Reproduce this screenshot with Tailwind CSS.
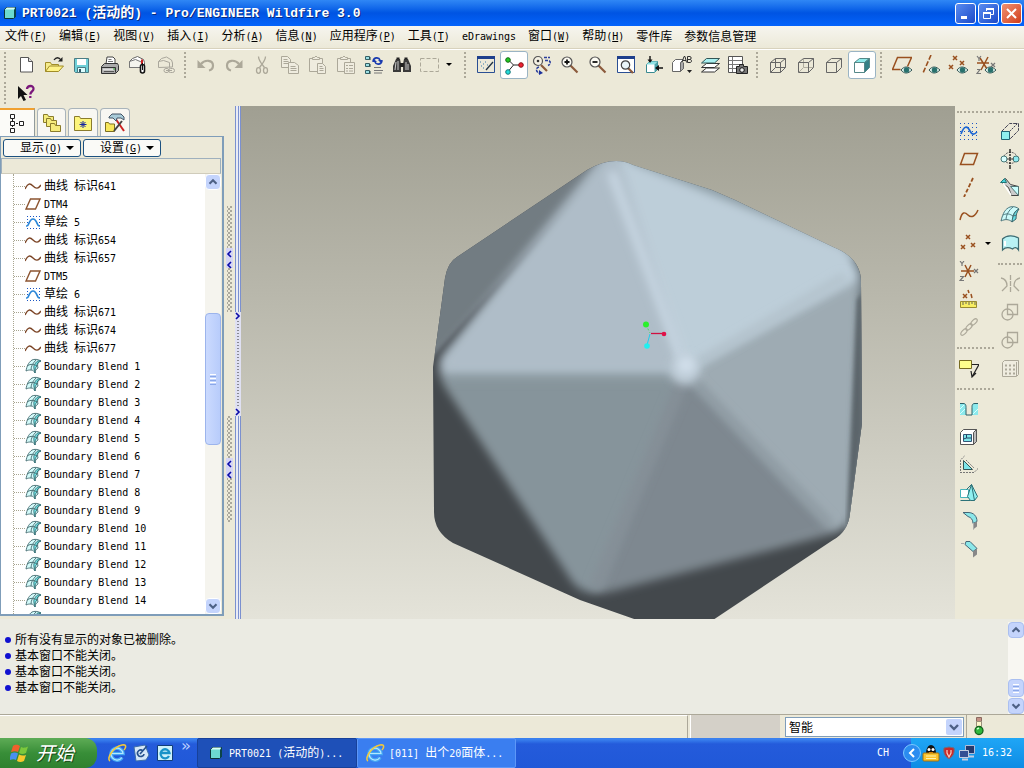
<!DOCTYPE html>
<html lang="zh-CN">
<head>
<meta charset="utf-8">
<meta name="viewport" content="width=device-width, initial-scale=1">
<title>PRT0021 (活动的) - Pro/ENGINEER Wildfire 3.0</title>
<script src="https://cdn.jsdelivr.net/npm/@tailwindcss/browser@4"></script>
</head>
<body class="flex h-screen flex-col overflow-hidden bg-[#ece9d8] font-['DejaVu_Sans_Mono','Noto_Sans_CJK_SC',monospace] text-[12px] leading-4 text-black">

<svg class="hidden" aria-hidden="true">
  <defs>
    <linearGradient id="gPage" x1="0" y1="0" x2="1" y2="1"><stop offset="0" stop-color="#fff"/><stop offset="1" stop-color="#7fb6e8"/></linearGradient>
    <symbol id="new" viewBox="0 0 20 20"><path d="M4.500 2.500h8l4 4v10.500h-12z" fill="#fff" stroke="#555"/><path d="M12.500 2.500v4h4" fill="#ddd" stroke="#555"/></symbol>
    <symbol id="open" viewBox="0 0 20 20"><path d="M1.500 16.500v-9h5l1 2h7v3" fill="#f6ec8c" stroke="#a08c28"/><path d="M1.500 16.500l4-5.500h14l-5 5.500z" fill="#fff387" stroke="#a08c28"/><path d="M10 5c2-3 5-3 7 0" fill="none" stroke="#222" stroke-width="1.300"/><path d="M18.500 2v4.500h-4.500z" fill="#222"/></symbol>
    <symbol id="save" viewBox="0 0 20 20"><path d="M2.500 3.500h14v14h-13l-1-1z" fill="#6fd0d8" stroke="#4c7c84"/><path d="M5 4h9v6H5z" fill="#fff"/><path d="M5.500 12.500h8v5h-8z" fill="#dff" stroke="#4c7c84"/><path d="M7 14h2v3H7z" fill="#356"/></symbol>
    <symbol id="print" viewBox="0 0 20 20"><path d="M6 9l1-7h6l2 2v6" fill="#fff" stroke="#444"/><path d="M8.500 4.500h3M8 6.500h5M8 8.500h5" stroke="#777"/><path d="M1.500 11.500l3-3h13l1 2v5l-3 3h-14z" fill="#aaa" stroke="#333"/><path d="M1.500 12.500h14v5" fill="none" stroke="#333"/><path d="M3 13.500h11v2H3z" fill="#ddd"/><path d="M4 16.500h10" stroke="#555"/><path d="M13 14h2" stroke="#3a3"/></symbol>
    <symbol id="mail" viewBox="0 0 20 20"><path d="M1.500 6.500l3-3 5-2 6 3 1 3v5h-15z" fill="#fff" stroke="#666"/><path d="M1.500 6.500l6-2 7 3v5h-13z" fill="#f4f4ee" stroke="#777"/><path d="M14 4.500v5" stroke="#c22" stroke-width="2"/><rect x="12.500" y="9.500" width="4" height="8.500" rx="2" fill="#fff" stroke="#111" stroke-width="1.600"/><path d="M14.500 8v7" stroke="#111"/></symbol>
    <symbol id="link" viewBox="0 0 20 20" fill="none" stroke="#aaa79c"><path d="M2.500 12.500v-6l3-3 5-1.500 5 3 1 3v4zM2.500 6.500l5-1 6 2v5"/><rect x="8" y="13.500" width="5" height="4" rx="2"/><rect x="12.500" y="13.500" width="6" height="4" rx="2"/><path d="M10 15.500h6"/></symbol>
    <symbol id="undo" viewBox="0 0 20 20"><path d="M5 9c4-5 12-4 12 1.500 0 3-2 4.500-4 5" fill="none" stroke="#aca899" stroke-width="2.200"/><path d="M1.500 5v8h8z" fill="#aca899"/></symbol>
    <symbol id="redo" viewBox="0 0 20 20"><path d="M15 9c-4-5-12-4-12 1.500 0 3 2 4.500 4 5" fill="none" stroke="#aca899" stroke-width="2.200"/><path d="M18.500 5v8h-8z" fill="#aca899"/></symbol>
    <symbol id="cut" viewBox="0 0 20 20" fill="none" stroke="#aca899" stroke-width="1.300"><path d="M6.500 1.500c0 4 3 7 6 11M13.500 1.500c0 4-3 7-6 11"/><ellipse cx="6.500" cy="15.500" rx="2" ry="2.800"/><ellipse cx="13.500" cy="15.500" rx="2" ry="2.800"/></symbol>
    <symbol id="copy" viewBox="0 0 20 20" fill="#efecdf" stroke="#aca899"><path d="M1.500 1.500h6l3 3v8h-9z"/><path d="M3.500 4.500h4M3.500 6.500h5M3.500 8.500h5"/><path d="M8.500 7.500h6l4 3v8h-10z"/><path d="M10.500 11.500h5M10.500 13.500h6M10.500 15.500h6"/></symbol>
    <symbol id="paste" viewBox="0 0 20 20" fill="#efecdf" stroke="#aca899"><path d="M1.500 3.500h13v13h-13z"/><path d="M4.500 4.500v-2h2l1.500-1.500 1.500 1.500h2v2z"/><path d="M9.500 8.500h5l3 3v7h-8z"/><path d="M11.500 11.500h3M11.500 13.500h4M11.500 15.500h4"/></symbol>
    <symbol id="pastesp" viewBox="0 0 20 20" fill="#efecdf" stroke="#aca899"><path d="M1.500 3.500h13v13h-13z"/><path d="M4.500 4.500v-2h2l1.500-1.500 1.500 1.500h2v2z"/><path d="M8.500 7.500h10v11h-10z"/><path d="M10 10.500h2M13 10.500h4M10 13.500h2M13 13.500h4M10 16h2M13 16h4"/></symbol>
    <symbol id="regen" viewBox="0 0 20 20"><g fill="#9adfe4" stroke="#356066"><path d="M1.500 1.500h4v3h-4zM1.500 8.500h4v3h-4zM1.500 15.500h4v3h-4z"/></g><path d="M6 2v3M6 9v3M6 16v3" stroke="#244"/><path d="M9 6c1-4 6-4 7-1M18 6c-1 4-6 4-7 1" fill="none" stroke="#1a3bb0" stroke-width="1.600"/><path d="M14 5h5l-2 3zM8 7h5l-3-3z" fill="#1a3bb0"/><path d="M10 12.500h7M10 15.500h9M10 18h8" stroke="#777"/></symbol>
    <symbol id="find" viewBox="0 0 20 20"><path d="M4 4h4l1 5v8H1v-6zM12 4h4l3 7v6h-8V9z" fill="#3a3a3a"/><path d="M8 8h4v4H8zM4.500 2.500h3v2h-3zM12.500 2.500h3v2h-3z" fill="#222"/><path d="M4 7l-1 8M6 6v9M14 7v8M16 9v6" stroke="#ccc"/></symbol>
    <symbol id="selbox" viewBox="0 0 20 20"><path d="M.5 3.500h18v13H.5z" fill="none" stroke="#aca899" stroke-dasharray="4 2"/></symbol>
    <symbol id="sketchwin" viewBox="0 0 20 20"><path d="M1.500 1.500h17v16h-17z" fill="url(#gPage)" stroke="#2a4f94"/><path d="M1 1h18v3H1z" fill="#1e3f8c"/><path d="M10 15l7-8" stroke="#234" stroke-width="1.300"/><path d="M4 7h1M7 9h1M5 11h1M9 7h1M11 10h1M7 13h1" stroke="#37a"/></symbol>
    <symbol id="spin" viewBox="0 0 20 20"><path d="M4.500 5l5 5h8M9.500 10l-5 6" fill="none" stroke="#222"/><circle cx="4" cy="5" r="2.300" fill="#2c2" stroke="#161"/><circle cx="17" cy="10" r="2.300" fill="#e23" stroke="#811"/><circle cx="4" cy="17" r="2.300" fill="#2dd" stroke="#177"/></symbol>
    <symbol id="orient" viewBox="0 0 20 20"><path d="M9 10l6 6" stroke="#8b5a3c" stroke-width="2.200"/><circle cx="6" cy="6" r="4.500" fill="#f4f1e4" stroke="#555" stroke-width="1.200"/><circle cx="6" cy="6" r="1.300" fill="#333"/><path d="M12 2.500h6M13 5.500h3c3 0 3 4 0 5M7 12c-4 1-3 6 1 6" fill="none" stroke="#2a3f9c" stroke-dasharray="3 1" stroke-width="1.500"/><path d="M7 15v5l4-2z" fill="#1a2f9c"/></symbol>
    <symbol id="zoomin" viewBox="0 0 20 20"><path d="M10.500 10.500l7 7" stroke="#8b5a3c" stroke-width="2.200"/><circle cx="7" cy="7" r="5" fill="#fbfaf2" stroke="#555" stroke-width="1.200"/><path d="M4.500 7h5M7 4.500v5" stroke="#111" stroke-width="1.800"/></symbol>
    <symbol id="zoomout" viewBox="0 0 20 20"><path d="M10.500 10.500l7 7" stroke="#8b5a3c" stroke-width="2.200"/><circle cx="7" cy="7" r="5" fill="#fbfaf2" stroke="#555" stroke-width="1.200"/><path d="M4.500 7h5" stroke="#111" stroke-width="1.800"/></symbol>
    <symbol id="refit" viewBox="0 0 20 20"><path d="M1.500 1.500h17v16h-17z" fill="#fff" stroke="#2a4f94"/><path d="M1 1h18v3H1z" fill="#1e3f8c"/><path d="M12 13l5 5" stroke="#8b5a3c" stroke-width="2.200"/><circle cx="9.500" cy="10" r="4.200" fill="#e9f4f8" stroke="#444" stroke-width="1.200"/></symbol>
    <symbol id="reorient" viewBox="0 0 20 20"><path d="M2.500 9.500l3-3h8v8l-3 3h-8z" fill="#fff" stroke="#3a8a90"/><path d="M2.500 9.500l3-3h8l-3 3z" fill="#8fe4e6"/><path d="M10.500 9.500l3-3v8l-3 3z" fill="#4aa4aa"/><path d="M6 1v6M19 13h-6" stroke="#111" stroke-width="1.400"/><path d="M3.500 4.500h5L6 8zM15 10v6l-4-3z" fill="#111"/></symbol>
    <symbol id="saved" viewBox="0 0 20 20"><path d="M.5 7.500l3-3h8v9l-3 3h-8z" fill="#fff" stroke="#666"/><path d="M8.500 7.500v9l3-3v-9z" fill="#aaa" stroke="#666"/><path d="M10 7.500l2-6h1l1.500 6M11 5.500h3M15.500 1.500v6h2.500c2 0 2-3 0-3h-2 2c1.500 0 1.500-3 0-3z" fill="#ece9d8" stroke="#333"/><path d="M15 15h5l-2.500 3z" fill="#222"/></symbol>
    <symbol id="layers" viewBox="0 0 20 20"><path d="M1.500 17l5-4h13l-5 4zM1.500 12.500l5-4h13l-5 4z" fill="#fff" stroke="#333"/><path d="M1.500 8l5-4.500h13L14.500 8z" fill="#a8f0f0" stroke="#355"/></symbol>
    <symbol id="viewmgr" viewBox="0 0 20 20"><path d="M.5 1.500h14v16H.5z" fill="#fff" stroke="#555"/><path d="M1 5.500h13M1 9.500h13M1 13.500h13M4.500 2v15" stroke="#777"/><path d="M8.500 11.500h3v-2h4v2h4v7h-11z" fill="#777" stroke="#222"/><circle cx="14" cy="15" r="2.300" fill="#eee" stroke="#111"/></symbol>
    <symbol id="wire" viewBox="0 0 20 20" fill="none" stroke="#666"><path d="M2.500 7.500h10v10h-10zM7.500 3.500h10v9h-10zM2.500 7.500l5-4M12.500 7.500l5-4M12.500 17.500l5-5M2.500 17.500l5-5"/></symbol>
    <symbol id="hidden" viewBox="0 0 20 20" fill="none" stroke="#666"><path d="M7.500 4v8.500H17M7 13l-4 4" stroke="#b0ad9f"/><path d="M2.500 7.500h10v10h-10zM2.500 7.500l5-4h10v9l-5 5M12.500 7.500l5-4"/></symbol>
    <symbol id="nohidden" viewBox="0 0 20 20" fill="none" stroke="#666"><path d="M2.500 7.500h10v10h-10zM2.500 7.500l5-4h10v9l-5 5M12.500 7.500l5-4"/></symbol>
    <symbol id="shade" viewBox="0 0 20 20" stroke="#588"><path d="M2.500 7.500h10v10h-10z" fill="#fff"/><path d="M2.500 7.500l5-4h10l-5 4z" fill="#8eeaea"/><path d="M12.500 7.500l5-4v9l-5 5z" fill="#338086"/></symbol>
    <symbol id="eye" viewBox="0 0 20 20"><path d="M9 15c3-4 7-4 11 0-4 4-8 4-11 0z" fill="#d9eee8" stroke="#355"/><circle cx="14.500" cy="15" r="2.700" fill="#28706c"/></symbol>
    <symbol id="eplane" viewBox="0 0 20 20"><path d="M8.500 14.500h-8l5-12h14l-4 9" fill="none" stroke="#99501f" stroke-width="1.500"/><use href="#eye"/></symbol>
    <symbol id="eaxis" viewBox="0 0 20 20"><path d="M11 0L3 18" fill="none" stroke="#99501f" stroke-width="1.600" stroke-dasharray="5 2"/><use href="#eye"/></symbol>
    <symbol id="epoint" viewBox="0 0 20 20"><path d="M5 1l4 4m0-4l-4 4M12 6l4 4m0-4l-4 4M1 10l4 4m0-4l-4 4" stroke="#99501f" stroke-width="1.500"/><use href="#eye"/></symbol>
    <symbol id="ecsys" viewBox="0 0 20 20"><path d="M1 8h12M4 3l7 11M12 2L5 15" stroke="#99501f" stroke-width="1.500"/><path d="M1 1l2 2.500 2-2.500M3 3v3M1 14.500h3l-3 4h4M15 8l4 4m0-4l-4 4" fill="none" stroke="#777" stroke-width="1.200"/><use href="#eye"/></symbol>
    <symbol id="help" viewBox="0 0 20 20"><path d="M2 3v13l3-3 2.500 5 2.500-1-2.500-5h4z" fill="#111"/><path d="M11 6c0-4 7-4 6.500 0-.2 2.500-3 2.500-3.200 5.500M14.300 13v2" fill="none" stroke="#7b177b" stroke-width="2.300"/></symbol>

    <symbol id="sketch" viewBox="0 0 20 20"><g fill="none" stroke="#1b56c4" stroke-dasharray="1 3"><path d="M1 2.500h18M1 6.500h18M1 10.500h18M1 14.500h18M1 18.500h18"/></g><path d="M2 13c3-8 6-9 9-3 2 4 4 4 7 1" fill="none" stroke="#1b66d4" stroke-width="1.700"/></symbol>
    <symbol id="sketchnode" viewBox="0 0 16 16"><path d="M2 2.500h13M2 14.500h13M2.500 5v8M14.500 5v8" stroke="#1b56c4" stroke-dasharray="1 2"/><path d="M1 12h1c2 0 2-7 6-7s4 7 6 7h1" fill="none" stroke="#2a86d8" stroke-width="1.700"/></symbol>
    <symbol id="plane" viewBox="0 0 20 20"><path d="M1.500 15.500l4-11h13l-4 11z" fill="none" stroke="#99501f" stroke-width="1.500"/></symbol>
    <symbol id="axis" viewBox="0 0 20 20"><path d="M14 1L5 20" stroke="#99501f" stroke-width="1.800" stroke-dasharray="4 2"/></symbol>
    <symbol id="curve" viewBox="0 0 20 20"><path d="M1 15c2-9 5-8 8-5s7 2 10-5" fill="none" stroke="#99501f" stroke-width="1.500"/></symbol>
    <symbol id="curvenode" viewBox="0 0 16 16"><path d="M0 11c3-6 5-6 8-3s5 3 8-1" fill="none" stroke="#7c4526" stroke-width="1.400"/></symbol>
    <symbol id="planenode" viewBox="0 0 16 16"><path d="M1 13l4.500-10h9.500l-4.500 10z" fill="none" stroke="#8c5430" stroke-width="1.400"/></symbol>
    <symbol id="blendnode" viewBox="0 0 16 16"><path d="M1 13C2 8 3 5 7 2c2-1 6-1 9 1-3 1-4 3-3 7-2 1-3 3-3 5-1-2-2-3-4-3-2 0-3 0-5 1z" fill="#d4fbfb" stroke="#52777b"/><path d="M10 15c0-4 0-5 2-7 0-3 1-4 4-5-3-1-5 1-6 3-2 2-1 5 0 9z" fill="#6fe6e8" stroke="#3c777c"/><path d="M2 8c3-2 5-2 8-1l3 1M6 12c0-4 2-7 5-10" fill="none" stroke="#52777b"/></symbol>
    <symbol id="point" viewBox="0 0 20 20"><path d="M7 2l4 4m0-4L7 6M12 10l4 4m0-4l-4 4M2 12l4 4m0-4l-4 4" stroke="#99501f" stroke-width="1.500"/></symbol>
    <symbol id="csys" viewBox="0 0 20 20"><path d="M2 10h13M6 4l6 12M12 4L6 16" stroke="#99501f" stroke-width="1.500"/><path d="M1 0l2 2.500L5 0M3 2v3M1 15.500h3.500L1 19.500h4M15 8l4 4m0-4l-4 4" fill="none" stroke="#777" stroke-width="1.200"/></symbol>
    <symbol id="analysis" viewBox="0 0 20 20"><path d="M4 5l4 4m0-4L4 9M9 1l1 3M12 5l1 4" stroke="#99501f" stroke-width="1.500"/><path d="M1.500 12.500h16v6h-16z" fill="#f8ee62" stroke="#998b30"/><path d="M4 13v3M7 13v2M10 13v3M13 13v2M16 13v3" stroke="#665"/></symbol>
    <symbol id="chain" viewBox="0 0 20 20" fill="none" stroke="#aca899" stroke-width="1.200"><ellipse cx="5" cy="15" rx="2" ry="4" transform="rotate(45 5 15)"/><ellipse cx="10" cy="10" rx="2" ry="4" transform="rotate(45 10 10)"/><ellipse cx="15" cy="5" rx="2" ry="4" transform="rotate(45 15 5)"/></symbol>
    <symbol id="note" viewBox="0 0 20 20"><path d="M.5 2.500h12v8H.5z" fill="#ffff8c" stroke="#776b20"/><path d="M13 6.500h7L13.500 18M12 13l1 6 4-4" fill="none" stroke="#222" stroke-width="1.200"/></symbol>
    <symbol id="hole" viewBox="0 0 20 20"><path d="M1 4c4 0 6 0 6 4v8H1zM19 4c-4 0-6 0-6 4v8h6z" fill="#8be9ec"/><path d="M1 4.500h3c3 0 3 2 3 4v7.500h6V8.500c0-2 0-4 3-4h3" fill="none" stroke="#2f5f66"/><path d="M1 10l4-4M1 15l5-5M14 15l5-5" stroke="#d8ffff"/></symbol>
    <symbol id="shell" viewBox="0 0 20 20"><path d="M1.500 5.500l3-3h13v12l-3 3h-13z" fill="#fff" stroke="#555"/><path d="M14.500 5.500v12l3-3v-12z" fill="#bbb" stroke="#555"/><path d="M4.500 7.500h8v7h-8z" fill="#7de5ea" stroke="#357"/><path d="M4.500 12l3-1h5M7.500 7.500V11" fill="none" stroke="#246"/></symbol>
    <symbol id="rib" viewBox="0 0 20 20"><path d="M4.500 14.500v-9l9 9z" fill="#7de5ea" stroke="#355"/><path d="M1.500 16V5l4-4M1 17.500h14l4-4M7 5l8 8" fill="none" stroke="#777" stroke-dasharray="2 1"/></symbol>
    <symbol id="draft" viewBox="0 0 20 20"><path d="M1.500 6.500h8v8h-8z" fill="#fff" stroke="#4ab4ba"/><path d="M1.500 17.500h10l-3-4 4-12 6 12-3 4h-4" fill="#8ff0f0" stroke="#2c7278"/><path d="M7.500 6.500l5-5 3 16" fill="none" stroke="#2c7278"/></symbol>
    <symbol id="round" viewBox="0 0 20 20"><path d="M4 1.500h5c6 0 9 4 9 9l-4 2c0-4-2-6-5-7z" fill="#8be7e9" stroke="#467"/><path d="M14 12.500l4-2v5l-4 3z" fill="#888"/><path d="M14.500 12v6.500" stroke="#aaa"/></symbol>
    <symbol id="chamfer" viewBox="0 0 20 20"><path d="M7 2.500h4l7 7-4 3-8-7z" fill="#8be7e9" stroke="#467"/><path d="M14 12.500l4-3v6l-4 3z" fill="#888"/><path d="M2 4.500h3" stroke="#aaa"/></symbol>
    <symbol id="extrude" viewBox="0 0 20 20"><path d="M1.500 10.500l8-8h9v7l-9 9" fill="none" stroke="#445" stroke-dasharray="4 1"/><path d="M1.500 10.500h8v8h-8z" fill="#8ff0f0" stroke="#267"/><path d="M9.500 10.500l8-8" stroke="#445" stroke-dasharray="2 1"/></symbol>
    <symbol id="revolve" viewBox="0 0 20 20"><path d="M4 7c3-5 10-5 13 0M6 13c3 2 6 2 9 0" fill="none" stroke="#666" stroke-dasharray="2 1"/><circle cx="4" cy="10" r="3" fill="#d8ffff" stroke="#477"/><circle cx="16" cy="10" r="3" fill="#8feaf0" stroke="#477"/><path d="M10 0v20" stroke="#111" stroke-width="1.300" stroke-dasharray="4 1 2 1"/><path d="M7 10h7" stroke="#444"/></symbol>
    <symbol id="sweep" viewBox="0 0 20 20"><path d="M1.500 5.500l4-4 5 6 8 2v9h-7l-3-8z" fill="#ccc" stroke="#444"/><path d="M10.500 9.500h8v9z" fill="#c9ffff" stroke="#577"/><path d="M3 6l8 12" stroke="#fff" stroke-width="1.500"/><path d="M.5 5.500l4-4 2 4z" fill="#4ad0d8" stroke="#277"/></symbol>
    <symbol id="blend" viewBox="0 0 20 20"><path d="M1 16C3 8 5 4 10 2c3-1 7 0 9 2-5 2-6 6-7 13-3-3-7-3-11-1z" fill="#ccfafa" stroke="#4c767c"/><path d="M12 17l4-3c0-5 1-7 3-10-4 2-6 5-7 13z" fill="#63dde2" stroke="#3c666c"/><path d="M3 10c4-2 7-1 10 1l4-1M6 15c0-5 3-10 7-13" fill="none" stroke="#4c767c"/></symbol>
    <symbol id="style" viewBox="0 0 20 20"><path d="M2.500 6c4-4 11-4 16-1v12c-2-3-4-3-6-1-4-2-7-2-10 1z" fill="#b9f2f4" stroke="#3d6c72" stroke-width="1.200"/><path d="M5 8v5" stroke="#fff" stroke-width="2"/></symbol>
    <symbol id="mirror" viewBox="0 0 20 20" fill="none" stroke="#aca899" stroke-width="1.300"><path d="M10.500 1v18" stroke-dasharray="5 1"/><path d="M1 4c5 1 6 4 6 8l-5 5M20 4c-5 1-6 4-6 8l5 5"/></symbol>
    <symbol id="merge" viewBox="0 0 20 20" fill="none" stroke="#aca899" stroke-width="1.300"><circle cx="7.500" cy="12.500" r="5.500"/><path d="M7.500 2.500h10v10h-10z"/></symbol>
    <symbol id="pattern" viewBox="0 0 20 20"><path d="M2.500 4.500l2-2h14v14l-2 2h-14z" fill="#efecdf" stroke="#aca899"/><path d="M16.500 4v14" stroke="#aca899"/><g stroke="#aca899" stroke-width="2" stroke-dasharray="2 2"><path d="M5 7.500h10M5 11.500h10M5 15.500h10"/></g></symbol>

    <symbol id="ie" viewBox="0 0 20 20"><path d="M15 14.500a6 6 0 1 1 1-4H5" fill="none" stroke="#46a8f4" stroke-width="3.600"/><path d="M15 14.500a6 6 0 1 1 1-4H5" fill="none" stroke="#b4e8ff" stroke-width="1.200"/><path d="M3 18C-1 16 6 4 15 2c5-1 4 3 2 5" fill="none" stroke="#f2c83c" stroke-width="1.600"/></symbol>
    <symbol id="cube" viewBox="0 0 14 14"><path d="M1.500 3.500l2-2h9v9l-2 2h-9z" fill="#6cd9d0" stroke="#0b3336"/><path d="M11 3.500v9l2-2v-9z" fill="#0b4448"/><path d="M2 3.500h9l1-2H4z" fill="#d7fff8"/></symbol>
    <symbol id="up" viewBox="0 0 16 16"><path d="M4 10l4-4 4 4" fill="none" stroke="#4d6185" stroke-width="2.400"/></symbol>
    <symbol id="down" viewBox="0 0 16 16"><path d="M4 6l4 4 4-4" fill="none" stroke="#4d6185" stroke-width="2.400"/></symbol>
  </defs>
</svg>

<header class="flex h-[26px] shrink-0 items-center bg-linear-to-b from-[#2f87f5] via-[#0054e3] to-[#0463fb] pl-[3px] pr-0.5 text-white">
  <svg class="size-[14px]"><use href="#cube"/></svg>
  <h1 class="ml-[5px] flex-1 whitespace-pre font-['Liberation_Mono','Noto_Sans_CJK_SC',monospace] text-[13px] font-bold [text-shadow:1px_1px_#0a2a7c]">PRT0021 (<span class="text-[14px]">活动的</span>) - Pro/ENGINEER Wildfire 3.0</h1>
  <div class="flex gap-0.5">
    <button aria-label="最小化" class="flex size-[21px] items-center justify-center rounded-[3px] border border-white bg-linear-to-br from-[#5a8cf0] to-[#1c48c8]"><svg class="size-[13px]" viewBox="0 0 13 13"><path d="M2 9h6v3H2z" fill="#fff"/></svg></button>
    <button aria-label="还原" class="flex size-[21px] items-center justify-center rounded-[3px] border border-white bg-linear-to-br from-[#5a8cf0] to-[#1c48c8]"><svg class="size-[13px]" viewBox="0 0 13 13" fill="none" stroke="#fff"><path d="M4.500 4V1.500h7v6H9"/><path d="M4 2h8M1 6h8" stroke-width="2"/><path d="M1.500 5.500h7v6h-7z"/></svg></button>
    <button aria-label="关闭" class="flex size-[21px] items-center justify-center rounded-[3px] border border-white bg-linear-to-br from-[#f09070] to-[#d03a14]"><svg class="size-[13px]" viewBox="0 0 13 13"><path d="M2 2l9 9M11 2l-9 9" stroke="#fff" stroke-width="2"/></svg></button>
  </div>
</header>

<nav id="menu" class="flex h-[23px] shrink-0 items-center gap-3 whitespace-nowrap border-b border-[#d8d2bd] bg-linear-to-b from-[#f6f5ef] to-[#ece9d8] pb-px pl-[5px]"></nav>

<div class="shrink-0">
  <div id="toolbar" class="flex h-[30px] items-center border-t border-white"></div>
  <div class="flex h-[27px] items-center">
    <i class="mx-1 h-[22px] w-0 border-l-2 border-dotted border-[#aca899]"></i>
    <button aria-label="上下文帮助" class="ml-0.5 flex size-7 items-center justify-center"><svg class="size-5"><use href="#help"/></svg></button>
  </div>
</div>

<main class="flex min-h-0 flex-1">
  <aside class="flex w-[224px] shrink-0 flex-col pb-[3px] pt-0.5">
    <div class="flex h-7 shrink-0 gap-0.5" role="tablist">
      <button role="tab" aria-selected="true" aria-label="模型树" class="flex w-[35px] items-center justify-center border-r border-t-2 border-r-[#919b9c] border-t-[#f0a030] bg-[#fbfbf8]"><svg class="size-5" viewBox="0 0 20 20" fill="#fff" stroke="#222"><path d="M5.500 6v10M6 10.500h7" stroke-dasharray="2 1"/><path d="M3.500 1.500h4v4h-4zM3.500 8.500h4v4h-4zM3.500 15.500h4v4h-4zM12.500 8.500h4v4h-4z"/></svg></button>
      <button role="tab" aria-label="文件夹浏览器" class="flex w-[29px] items-center justify-center rounded-t-sm border border-b-0 border-[#a9b4bb] bg-[#f8f7f2]"><svg class="size-5" viewBox="0 0 20 20" fill="#f5ec7c" stroke="#8a7c2c"><path d="M1.500 1.500h4l1 2h5v6h-10z"/><path d="M4.500 5.500h4l1 2h5v6h-10z"/><path d="M8.500 10.500h4l1 2h5v6h-10z"/></svg></button>
      <button role="tab" aria-label="收藏夹" class="flex w-[30px] items-center justify-center rounded-t-sm border border-b-0 border-[#a9b4bb] bg-[#f8f7f2]"><svg class="size-5" viewBox="0 0 20 20"><path d="M1.500 17.500v-14h5l1 2h11v12z" fill="#fdf57c" stroke="#8a7c2c"/><path d="M10 8v7M6.500 11.500h7M7.500 9l5 5M12.500 9l-5 5" stroke="#1626a0"/></svg></button>
      <button role="tab" aria-label="连接" class="flex w-[30px] items-center justify-center rounded-t-sm border border-b-0 border-[#a9b4bb] bg-[#f8f7f2]"><svg class="size-5" viewBox="0 0 20 20"><path d="M.5 18.500v-9h3l1 1.500h5v7.500z" fill="#f7e75c" stroke="#7d6f22"/><path d="M10 5l9 13" stroke="#c22" stroke-width="2"/><path d="M17 8L9 18" stroke="#444" stroke-width="2"/><path d="M4 4l3-3h9l3 3v3l-3-2h-4l-1 3-3-3H4z" fill="#a8cbd8" stroke="#456"/></svg></button>
    </div>
    <section class="flex min-h-0 flex-1 flex-col border-2 border-l-[1px] border-t border-[#7f9db9] bg-[#ece9d8] pr-px">
      <div class="flex h-[21px] shrink-0 items-center gap-0.5 pl-0.5">
        <button class="flex h-[18px] w-[78px] items-center justify-end gap-1 whitespace-nowrap rounded-[3px] border border-[#1c5180] bg-[#fafaf7] pr-1.5 pt-px"><span>显示<span class="text-[10px]">(<u>O</u>)</span></span><i class="border-4 border-b-0 border-x-transparent border-t-black"></i></button>
        <button class="flex h-[18px] w-[78px] items-center justify-end gap-1 whitespace-nowrap rounded-[3px] border border-[#1c5180] bg-[#fafaf7] pr-1.5 pt-px"><span>设置<span class="text-[10px]">(<u>G</u>)</span></span><i class="border-4 border-b-0 border-x-transparent border-t-black"></i></button>
      </div>
      <div class="h-4 shrink-0 border border-[#9fb0bd] border-b-[#d0ccbb]"></div>
      <div class="flex min-h-0 flex-1 bg-white">
        <ul id="tree" class="ml-3 min-w-0 flex-1 overflow-hidden border-l border-dotted border-[#a8a590] pt-[3px]"></ul>
        <div class="flex w-4 shrink-0 flex-col bg-[#f5f4ee]">
          <button aria-label="向上滚动" class="h-4 shrink-0 rounded-sm border border-white bg-[#c4d4fc]"><svg class="size-[14px]"><use href="#up"/></svg></button>
          <div class="flex-[123]"></div>
          <div class="flex flex-[131] flex-col items-center justify-center gap-px rounded-sm border border-[#9cb4ec] bg-linear-to-r from-[#cbdafe] to-[#b8ccfb]"><i class="h-px w-1.5 bg-white"></i><i class="h-px w-1.5 bg-[#8ba8e8]"></i><i class="h-px w-1.5 bg-white"></i><i class="h-px w-1.5 bg-[#8ba8e8]"></i><i class="h-px w-1.5 bg-white"></i><i class="h-px w-1.5 bg-[#8ba8e8]"></i></div>
          <div class="flex-[153]"></div>
          <button aria-label="向下滚动" class="h-4 shrink-0 rounded-sm border border-white bg-[#c4d4fc]"><svg class="size-[14px]"><use href="#down"/></svg></button>
        </div>
      </div>
    </section>
  </aside>

  <div class="flex w-[11px] shrink-0 flex-col items-center pt-[100px]">
    <svg class="h-[316px] w-[7px]" viewBox="0 0 7 316">
      <defs><pattern id="grip" width="4" height="4" patternUnits="userSpaceOnUse"><path d="M0 0h2v2H0zM2 2h2v2H2z" fill="#aaa89c"/></pattern></defs>
      <path d="M1 0h5v106H1zM1 210h5v106H1z" fill="url(#grip)"/>
      <path d="M0 42h7v20H0zM0 252h7v20H0z" fill="#d5d5f5"/>
      <path d="M5 45l-3 3 3 3M5 56l-3 3 3 3M5 255l-3 3 3 3M5 266l-3 3 3 3" fill="none" stroke="#0a0aa8" stroke-width="1.600"/>
    </svg>
  </div>
  <div class="flex w-1.5 shrink-0 flex-col items-center justify-between border-x border-[#7b90cf] bg-[#e9ebf5]">
    <i class="w-px flex-[205] bg-[#7b90cf]"></i>
    <svg class="h-[104px] w-1.5 shrink-0" viewBox="0 0 6 104"><path d="M0 0h6v104H0z" fill="#dfe0f2"/><path d="M3 9v86" stroke="#333" stroke-dasharray="1 2"/><path d="M1 1l3 3-3 3M1 97l3 3-3 3" fill="none" stroke="#0a0aa8" stroke-width="1.600"/></svg>
    <i class="w-px flex-[203] bg-[#7b90cf]"></i>
  </div>

  <div class="min-w-0 flex-1 bg-linear-to-b from-[#a09f92] to-[#e4e3d9]">
    <svg class="size-full" viewBox="241 106 714 513" preserveAspectRatio="xMidYMid slice" role="img" aria-label="二十面体模型">
      <defs>
        <clipPath id="body"><path d="M587 170Q613 155 633 165L712 190 735 200 833 247Q861 258 861 282L862 423 850 513Q848 532 833 540L713 620H637L580 600 453 543Q434 532 434 512L433 367 445 278Q448 262 457 257z"/></clipPath>
        <filter id="soft" x="-10%" y="-10%" width="120%" height="120%"><feGaussianBlur stdDeviation="5"/></filter>
        <filter id="edge" x="-10%" y="-10%" width="120%" height="120%"><feGaussianBlur stdDeviation="2"/></filter>
        <filter id="ridge" x="241" y="106" width="714" height="513" filterUnits="userSpaceOnUse"><feGaussianBlur stdDeviation="4"/></filter>
      </defs>
      <g clip-path="url(#body)">
        <path d="M420 140h460v490H420z" fill="#43484c"/>
        <g filter="url(#edge)">
          <path d="M620 150L430 360V230z" fill="#727b82"/>
          <path d="M620 150L860 240V300H620z" fill="#8b9ba3"/>
          <path d="M845 260h30v280h-30z" fill="#667177"/>
        </g>
        <g filter="url(#soft)">
          <path d="M602 156Q614 146 636 164L842 246Q858 260 860 284L852 515Q848 530 828 534L612 591Q585 597 572 581L447 389Q431 365 449 347z" fill="#9eabb3"/>
          <path d="M602 156Q616 146 626 160L685 374H447Q431 366 449 347z" fill="#afbdc8"/>
          <path d="M618 154Q626 156 636 164L842 246Q856 260 860 279L685 372z" fill="#bdced9"/>
          <path d="M685 374H440L572 581Q580 593 597 593z" fill="#86949b"/>
          <path d="M685 372L597 593 612 591 833 530z" fill="#7e8890"/>
        </g>
        <g filter="url(#ridge)" fill="none" stroke-linecap="round">
          <path d="M613 176L685 368" stroke="#c4d3df" stroke-width="11"/>
          <path d="M685 370L842 278" stroke="#b3c2cc" stroke-width="8"/>
          <path d="M450 364H680" stroke="#b0bec8" stroke-width="4"/>
          <path d="M450 379H680" stroke="#909ea5" stroke-width="3"/>
          <path d="M685 372L828 522" stroke="#919da5" stroke-width="9"/>
          <path d="M685 375L597 584" stroke="#858f97" stroke-width="12"/>
        </g>
        <circle cx="685" cy="370" r="15" fill="#bccad5" filter="url(#ridge)"/>
        <circle cx="686" cy="365" r="9" fill="#d0deea" filter="url(#ridge)"/>
        <path d="M857 300L862 292V430L850 525 847 525z" fill="#5b656a" filter="url(#edge)"/>
      </g>
      <path d="M646 325l4 8" stroke="#4d6" stroke-dasharray="2 2"/><path d="M650 334l-3 11" stroke="#2ce"/><path d="M651 333.500h13" stroke="#d01040" stroke-width="1.300"/>
      <circle cx="646" cy="324.500" r="3" fill="#2bf02b"/><circle cx="664" cy="334" r="2.300" fill="#e01048"/><circle cx="647" cy="346" r="2.800" fill="#1ff0f0"/>
    </svg>
  </div>

  <div class="flex w-[69px] shrink-0">
    <div id="right1" class="flex w-[41px] flex-col"></div>
    <div id="right2" class="flex w-7 flex-col"></div>
  </div>
</main>

<section class="flex h-[95px] shrink-0 bg-[#ebebe3] pt-[3px]">
  <ul class="flex-1 pl-[5px] pt-2.5">
    <li class="flex items-center gap-1"><i class="size-1.5 rounded-full bg-[#1010d0]"></i>所有没有显示的对象已被删除。</li>
    <li class="flex items-center gap-1"><i class="size-1.5 rounded-full bg-[#1010d0]"></i>基本窗口不能关闭。</li>
    <li class="flex items-center gap-1"><i class="size-1.5 rounded-full bg-[#1010d0]"></i>基本窗口不能关闭。</li>
    <li class="flex items-center gap-1"><i class="size-1.5 rounded-full bg-[#1010d0]"></i>基本窗口不能关闭。</li>
  </ul>
  <div class="flex w-4 flex-col bg-[#f8f7f2]">
    <button aria-label="向上滚动消息" class="h-4 shrink-0 rounded-sm border border-[#aabff0] bg-[#c4d4fc]"><svg class="size-[14px]"><use href="#up"/></svg></button>
    <div class="flex-1"></div>
    <div class="flex h-[18px] flex-col items-center justify-center gap-px rounded-sm border border-[#aabff0] bg-[#c4d4fc]"><i class="h-px w-1.5 bg-white"></i><i class="h-px w-1.5 bg-[#8ba8e8]"></i><i class="h-px w-1.5 bg-white"></i><i class="h-px w-1.5 bg-[#8ba8e8]"></i><i class="h-px w-1.5 bg-white"></i></div>
    <button aria-label="向下滚动消息" class="mt-px h-4 shrink-0 rounded-sm border border-[#aabff0] bg-[#c4d4fc]"><svg class="size-[14px]"><use href="#down"/></svg></button>
  </div>
</section>

<section class="flex h-6 shrink-0 border-t border-[#aca899] bg-[#ece9d8]">
  <div class="flex-1 border-r border-t border-r-[#aca899] border-t-white"></div>
  <div class="ml-0.5 w-[90px] border-l border-white bg-[#d4d0c8]"></div>
  <div class="relative ml-[5px] mt-0.5 h-5 w-[179px]">
    <label for="filter" class="sr-only">选择过滤器</label>
    <select id="filter" class="h-5 w-full appearance-none border border-[#7f9db9] bg-white py-0 pl-[3px] pr-5 font-['Noto_Sans_CJK_SC',sans-serif] text-[12px] leading-[18px]"><option>智能</option></select>
    <svg class="pointer-events-none absolute right-0.5 top-0.5 size-4 rounded-xs bg-[#c4d4fc]"><use href="#down"/></svg>
  </div>
  <div class="ml-0.5 w-[58px] border-l border-[#aca899] pl-1.5">
    <svg class="h-[22px] w-3" viewBox="0 0 12 22"><path d="M3.500 2.500h5v4h-5z" fill="#c49084" stroke="#8a6a60"/><path d="M3.500 6.500h5v5h-5z" fill="#fff6cc" stroke="#99907a"/><circle cx="6" cy="15.500" r="4" fill="#2fb83c" stroke="#15601c" stroke-width="1.300"/><path d="M4 14l2-1" stroke="#cfc" stroke-width="1.500"/></svg>
  </div>
</section>

<footer class="flex h-[30px] shrink-0 items-stretch bg-linear-to-b from-[#3a80ee] from-5% via-[#245bdb] via-20% to-[#2058d8] text-white">
  <button class="flex w-[97px] items-center gap-1.5 rounded-r-xl bg-linear-to-b from-[#5eac56] via-[#388e38] to-[#2f812f] pl-2.5 text-[19px] italic [text-shadow:1px_1px_#1a4a1a]">
    <svg class="size-5" viewBox="0 0 20 20"><path d="M3 3c3-2 5-1 7 0L8 9C6 8 4 8 1 9z" fill="#f0602c"/><path d="M11 4c2 1 4 1 7-.5L16 10c-3 1.500-5 1-7 0z" fill="#7cc83c"/><path d="M1 10.500c3-1.500 5-1 7 0L6 17c-2-1-4-1-7 .5z" fill="#4a90f0"/><path d="M9 11.500c2 1 4 1.500 7 .5l-2 6c-3 1.500-5 1-7 0z" fill="#f8c82c"/></svg>
    <span>开始</span>
  </button>
  <div class="flex items-center gap-1 pl-2.5">
    <button aria-label="Internet Explorer"><svg class="size-5"><use href="#ie"/></svg></button>
    <button aria-label="显示桌面"><svg class="size-5" viewBox="0 0 20 20"><path d="M3 4l11-2 4 10-3 5-10 1z" fill="#d5e8f8" stroke="#3d6ea8"/><path d="M12 8c-3-3-7 1-5 4s6 1 6-1M9 11l7-8" fill="none" stroke="#25518c" stroke-width="1.600"/></svg></button>
    <button aria-label="浏览器"><svg class="size-5" viewBox="0 0 20 20"><path d="M2.500 2.500h15v15h-15z" fill="#ccf1fb" stroke="#103d78"/><path d="M14 13a4.500 4.500 0 1 1 .5-3H6" fill="none" stroke="#1892c8" stroke-width="2.300"/></svg></button>
    <span class="w-4 self-start pl-0.5 text-[16px] text-[#b9d0ff]">»</span>
  </div>
  <button class="ml-0.5 flex w-[160px] items-center gap-1.5 whitespace-pre rounded-xs border border-[#17419a] bg-[#1e50b8] pl-[11px] text-left"><svg class="size-[14px]"><use href="#cube"/></svg><span><span class="text-[10px]">PRT0021 (</span>活动的<span class="text-[10px]">)...</span></span></button>
  <button class="flex w-[159px] items-center gap-1 whitespace-pre rounded-xs border border-[#5d97f8] bg-[#3a7ef0] pl-[7px] text-left"><svg class="size-5"><use href="#ie"/></svg><span><span class="text-[10px]">[011] </span>出个<span class="text-[10px]">20</span>面体<span class="text-[10px]">...</span></span></button>
  <div class="flex flex-1 items-center justify-end pr-[22px] text-[10px]">CH</div>
  <div class="flex w-[113px] items-center bg-linear-to-b from-[#1fa6f6] to-[#0d8ce4]">
    <button aria-label="显示隐藏的图标" class="-ml-2 flex size-[18px] items-center justify-center rounded-full border border-[#7cc8ff] bg-[#2b8cf0]"><svg class="size-3" viewBox="0 0 12 12"><path d="M8 2L4 6l4 4" fill="none" stroke="#fff" stroke-width="2"/></svg></button>
    <svg class="ml-px size-[18px]" viewBox="0 0 18 18"><path d="M4 10c0-12 10-12 10 0z" fill="#111"/><circle cx="7" cy="5.500" r="1.500" fill="#fff"/><circle cx="11" cy="5.500" r="1.500" fill="#fff"/><path d="M7 8h4v1.500H7z" fill="#f80"/><rect x="1" y="9" width="16" height="8" rx="1" fill="#fcc42c" stroke="#a4700c"/><path d="M4 12h10M4 14.500h10" stroke="#fff3b0"/></svg>
    <svg class="size-[18px]" viewBox="0 0 18 18"><path d="M4 4l5-1 5 1c1 6-2 9-5 11C6 13 3 10 4 4z" fill="#cc2828" stroke="#6b6f80"/><path d="M7 6v3l2 4 2-4V6" fill="none" stroke="#f6d0c0" stroke-width="1.200"/></svg>
    <svg class="size-[18px]" viewBox="0 0 18 18"><path d="M7.500 1.500h9v8h-9z" fill="#24386c" stroke="#b0bcd8"/><path d="M1.500 6.500h9v7h-9z" fill="#344e94" stroke="#c4cce0"/><path d="M4 15.500h6M11 12.500h5" stroke="#c4cce0" stroke-width="2"/></svg>
    <time class="ml-1.5 text-[10px]">16:32</time>
  </div>
</footer>

<script>
  const $ = id => document.getElementById(id);
  const icon = id => `<svg class="size-5"><use href="#${id}"/></svg>`;

  // Menu bar: label, mnemonic
  $('menu').innerHTML = [['文件','F'],['编辑','E'],['视图','V'],['插入','I'],['分析','A'],['信息','N'],['应用程序','P'],['工具','T'],['','eDrawings'],['窗口','W'],['帮助','H'],['零件库',''],['参数信息管理','']]
    .map(([t, k]) => `<button>${t}${k ? `<span class="text-[10px]">${t ? `(<u>${k}</u>)` : k}</span>` : ''}</button>`).join('');

  // Main toolbar: '|' is a group handle, '*' marks a pressed button, 'v' is a drop-down arrow
  const names = {new:'新建',open:'打开',save:'保存',print:'打印',mail:'发送邮件',link:'发送链接',undo:'撤消',redo:'重做',cut:'剪切',copy:'复制',paste:'粘贴',pastesp:'选择性粘贴',regen:'再生',find:'查找',selbox:'框选',sketchwin:'重画',spin:'旋转中心',orient:'定向模式',zoomin:'放大',zoomout:'缩小',refit:'重新调整',reorient:'重定向',saved:'保存的视图',layers:'层',viewmgr:'视图管理器',wire:'线框',hidden:'隐藏线',nohidden:'无隐藏线',shade:'着色',eplane:'平面显示',eaxis:'轴显示',epoint:'点显示',ecsys:'坐标系显示',sketch:'草绘',plane:'基准平面',axis:'基准轴',curve:'曲线',point:'基准点',csys:'坐标系',analysis:'分析特征',chain:'参照',note:'注释',hole:'孔',shell:'壳',rib:'筋',draft:'拔模',round:'倒圆角',chamfer:'倒角',extrude:'拉伸',revolve:'旋转',sweep:'可变截面扫描',blend:'边界混合',style:'造型',mirror:'镜像',merge:'合并',merge2:'修剪',pattern:'阵列'};
  $('toolbar').innerHTML = '| new open save print mail link | undo redo cut copy paste pastesp regen find selbox v | sketchwin *spin orient zoomin zoomout refit reorient saved layers viewmgr | wire hidden nohidden *shade | eplane eaxis epoint ecsys'
    .split(' ').map(s => {
      if (s === '|') return '<i class="ml-1 mr-1.5 h-[26px] w-0 border-l-2 border-dotted border-[#aca899]"></i>';
      if (s === 'v') return '<button aria-label="框选选项" class="h-7 w-4 pl-0.5"><i class="block w-0 border-[3px] border-b-0 border-x-transparent border-t-black"></i></button>';
      const on = s[0] === '*', id = on ? s.slice(1) : s;
      return `<button aria-label="${names[id]}" class="${on ? 'flex size-7 items-center justify-center rounded-[3px] border border-[#9ab4c4] bg-white' : 'flex size-7 items-center justify-center'}">${icon(id)}</button>`;
    }).join('');

  // Vertical feature toolbars
  const column = list => list.split(' ').map((s, i) => s === '|'
    ? `<div class="${i ? 'flex h-[13px] items-center' : 'flex h-[11px] items-center'}"><i class="mx-0.5 h-0 flex-1 border-t-2 border-dotted border-[#aca899]"></i></div>`
    : `<div class="flex h-7 items-center"><button aria-label="${names[s]}" class="flex size-7 items-center justify-center">${icon(s === 'merge2' ? 'merge' : s)}</button>${s === 'point' ? '<i class="ml-0.5 border-[3px] border-b-0 border-x-transparent border-t-black"></i>' : ''}</div>`).join('');
  $('right1').innerHTML = column('| sketch plane axis curve point csys analysis chain | note | hole shell rib draft round chamfer');
  $('right2').innerHTML = column('| extrude revolve sweep blend style | mirror merge merge2 pattern');

  // Model tree
  const c = n => ['curvenode', `曲线<span class="text-[10px]"> </span>标识<span class="text-[10px]">${n}</span>`];
  const d = n => ['planenode', `<span class="text-[10px]">DTM${n}</span>`];
  const k = n => ['sketchnode', `草绘<span class="text-[10px]"> ${n}</span>`];
  const rows = [c(641), d(4), k(5), c(654), c(657), d(5), k(6), c(671), c(674), c(677)];
  for (let i = 1; i <= 14; i++) rows.push(['blendnode', `<span class="text-[10px]">Boundary Blend ${i}</span>`]);
  rows.push(['blendnode', '']);
  $('tree').innerHTML = rows.map(([ic, t]) => `<li class="flex h-[18px] items-center whitespace-pre"><i class="w-[11px] border-t border-dotted border-[#a8a590]"></i><svg class="mr-[3px] size-4 shrink-0"><use href="#${ic}"/></svg><span>${t}</span></li>`).join('');
</script>
</body>
</html>
